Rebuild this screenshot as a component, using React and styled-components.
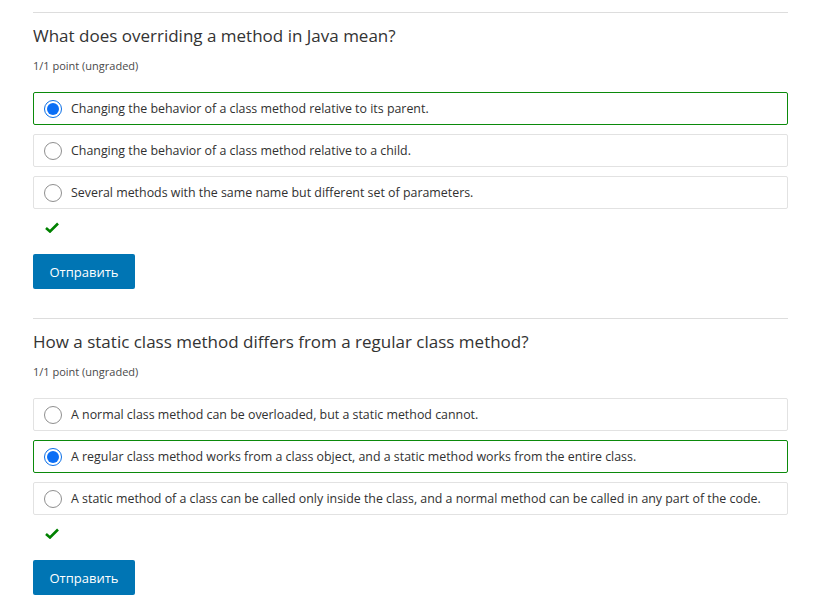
import React from "react";
import styled, { createGlobalStyle } from "styled-components";

const Global = createGlobalStyle`
  body {
    margin: 0;
    background: #fff;
    font-family: "Open Sans", "Noto Sans", sans-serif;
    color: #313131;
  }
`;

const Page = styled.div`
  width: 755px;
  padding: 12px 0 0 33px;
`;

const Problem = styled.section`
  border-top: 1px solid #dddddd;
  padding-top: 11px;
  margin-bottom: 29px;
`;

const Title = styled.h3`
  margin: 0;
  font-size: 17px;
  font-weight: 400;
  line-height: 24px;
  color: #333;
`;

const Points = styled.div`
  margin-top: 10px;
  font-size: 11px;
  line-height: 16px;
  color: #4a4a4a;
`;

const Options = styled.div`
  display: flex;
  flex-direction: column;
  gap: 9px;
  margin-top: 18px;
`;

const Option = styled.div`
  display: flex;
  align-items: center;
  gap: 9px;
  height: 33px;
  box-sizing: border-box;
  padding: 0 10px;
  border-width: 1px;
  border-style: solid;
  border-color: ${(p) => (p.$correct ? "#0b8a0b" : "#e2e2e2")};
  border-radius: 2px;
  font-size: 12.4px;
  color: #313131;
`;

const Radio = styled.span`
  width: 18px;
  height: 18px;
  box-sizing: border-box;
  border-radius: 50%;
  border: 1px solid ${(p) => (p.$on ? "#0a6ee6" : "#8f8f8f")};
  display: flex;
  align-items: center;
  justify-content: center;
  flex: none;
  &::after {
    content: "";
    display: ${(p) => (p.$on ? "block" : "none")};
    width: 12px;
    height: 12px;
    border-radius: 50%;
    background: #0a6ef5;
  }
`;

const Status = styled.div`
  height: 18px;
  margin: 9px 0 0 12px;
  display: flex;
  align-items: center;
`;

const Submit = styled.button`
  margin-top: 18px;
  width: 102px;
  height: 35px;
  border: none;
  border-radius: 2px;
  background: #0075b4;
  color: #fff;
  font-family: inherit;
  font-size: 13px;
`;

const Check = () => (
  <svg width="14" height="11" viewBox="0 0 14 11">
    <path d="M1 6 L5 9.5 L13 1.5" fill="none" stroke="#008100" strokeWidth="2.6" />
  </svg>
);

const problems = [
  {
    title: "What does overriding a method in Java mean?",
    answer: 0,
    options: [
      "Changing the behavior of a class method relative to its parent.",
      "Changing the behavior of a class method relative to a child.",
      "Several methods with the same name but different set of parameters.",
    ],
  },
  {
    title: "How a static class method differs from a regular class method?",
    answer: 1,
    options: [
      "A normal class method can be overloaded, but a static method cannot.",
      "A regular class method works from a class object, and a static method works from the entire class.",
      "A static method of a class can be called only inside the class, and a normal method can be called in any part of the code.",
    ],
  },
];

const App = () => (
  <Page>
    <Global />
    {problems.map((p) => (
      <Problem key={p.title}>
        <Title>{p.title}</Title>
        <Points>1/1 point (ungraded)</Points>
        <Options>
          {p.options.map((o, i) => (
            <Option key={o} $correct={i === p.answer}>
              <Radio $on={i === p.answer} />
              {o}
            </Option>
          ))}
        </Options>
        <Status>
          <Check />
        </Status>
        <Submit>Отправить</Submit>
      </Problem>
    ))}
  </Page>
);

export default App;
